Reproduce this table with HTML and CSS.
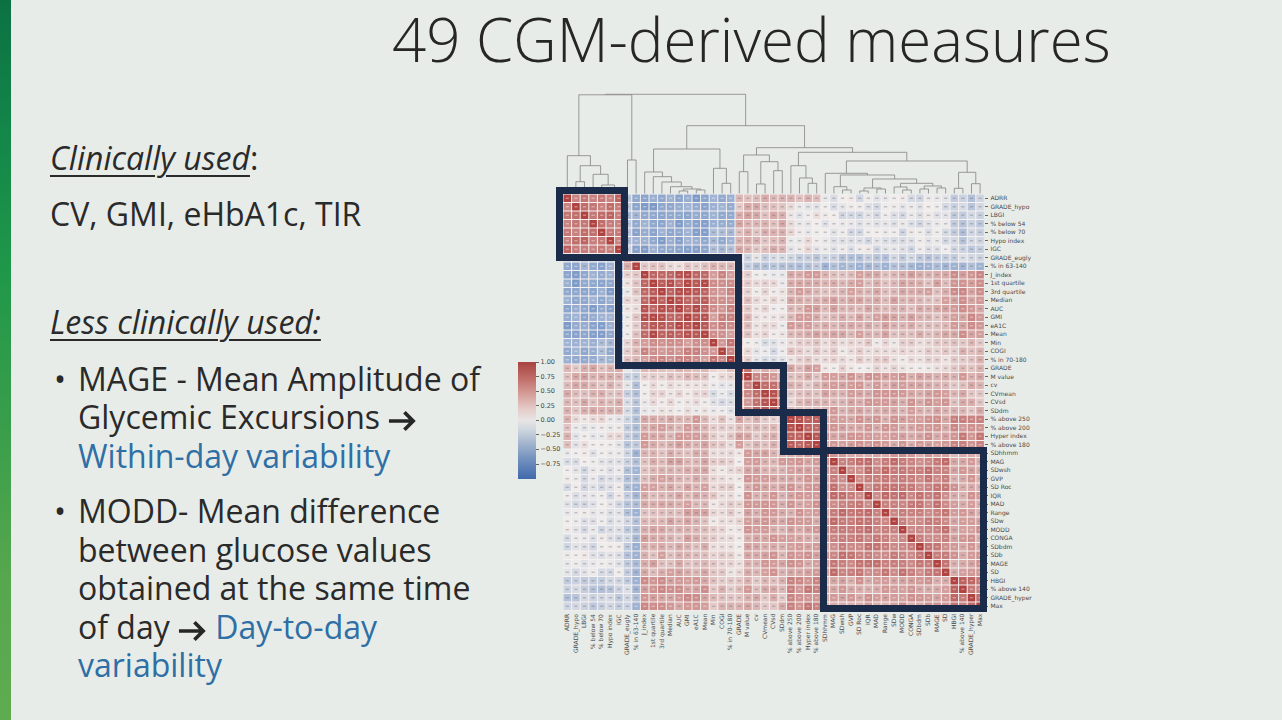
FILE: index.html
```html
<!DOCTYPE html>
<html lang="en">
<head>
<meta charset="utf-8">
<title>49 CGM-derived measures</title>
<link rel="stylesheet" href="styles.css">
</head>
<body>
<div class="slide">
  <div class="accent"></div>
  <div class="content">
    <h1 class="title">49 CGM-derived measures</h1>
    <div class="main">
      <div class="text">
        <p class="head"><span class="u">Clinically used</span>:</p>
        <p class="plain">CV, GMI, eHbA1c, TIR</p>
        <p class="head2"><span class="u">Less clinically used:</span></p>
        <ul class="bullets">
          <li><span class="dot">•</span><span class="lines">MAGE - Mean Amplitude of<br>Glycemic Excursions <svg class="arrow" viewBox="0 0 30 22"><path d="M1 11H26.5M17 2L26 11L17 20"/></svg><br><span class="blue">Within-day variability</span></span></li>
          <li><span class="dot">•</span><span class="lines">MODD- Mean difference<br>between glucose values<br>obtained at the same time<br>of day <svg class="arrow" viewBox="0 0 30 22"><path d="M1 11H26.5M17 2L26 11L17 20"/></svg> <span class="blue">Day-to-day</span><br><span class="blue">variability</span></span></li>
        </ul>
      </div>
      <div class="figure">
        <div class="cbar-col">
          <div class="cbar"></div>
          <div class="cticks">
            <div class="ctick">1.00</div>
            <div class="ctick">0.75</div>
            <div class="ctick">0.50</div>
            <div class="ctick">0.25</div>
            <div class="ctick">0.00</div>
            <div class="ctick">−0.25</div>
            <div class="ctick">−0.50</div>
            <div class="ctick">−0.75</div>
          </div>
        </div>
        <div class="plot">
          <svg id="dendro" class="dendro" viewBox="0 0 421.4 109" width="421.4" height="109"></svg>
          <div class="matrix-wrap">
            <svg id="matrix" class="matrix" viewBox="0 0 421.4 416.5" width="421.4" height="416.5"></svg>
            <div class="box b1"></div>
            <div class="box b2"></div>
            <div class="box b3"></div>
            <div class="box b4"></div>
            <div class="box b5"></div>
          </div>
          <div class="xlabels" id="xlabels"></div>
        </div>
        <div class="ylabels" id="ylabels"></div>
      </div>
    </div>
  </div>
</div>
<script src="script.js"></script>
</body>
</html>
```

FILE: styles.css
```css
* { box-sizing: border-box; }
html, body { margin: 0; padding: 0; }
body {
  width: 1282px;
  height: 720px;
  overflow: hidden;
  background: #e8ece8;
  font-family: "Open Sans", "Liberation Sans", sans-serif;
  color: #2a2a2a;
}
.slide { display: flex; height: 720px; }
.accent {
  width: 11px;
  flex: none;
  background: linear-gradient(180deg, #0c7142 0%, #138649 18%, #209849 38%, #3a9e4b 60%, #56a74d 80%, #5fab50 100%);
}
.content { flex: 1; display: flex; flex-direction: column; min-width: 0; }
.title {
  margin: 0;
  height: 85px;
  padding-left: 381px;
  font-weight: 300;
  font-size: 60px;
  line-height: 78px;
  color: #262626;
  white-space: nowrap;
}
.main { display: flex; }
.text {
  width: 507px;
  flex: none;
  padding: 54px 0 0 39px;
  font-size: 32px;
  line-height: 38.5px;
}
.text p { margin: 0; white-space: nowrap; }
.head { margin-bottom: 17px !important; }
.plain { margin-bottom: 70px !important; }
.head2 { margin-bottom: 18px !important; }
.u {
  font-style: italic;
  text-decoration: underline;
  text-decoration-thickness: 1.5px;
  text-underline-offset: 5px;
}
.bullets { list-style: none; margin: 0; padding: 0; }
.bullets li { display: flex; margin-bottom: 17px; white-space: nowrap; }
.dot { width: 28px; flex: none; padding-left: 4px; }
.blue { color: #2e6fa6; }
.arrow {
  width: 29px;
  height: 22px;
  vertical-align: -3px;
  fill: none;
  stroke: #262626;
  stroke-width: 3.8;
}

.figure { display: flex; flex: none; }
.cbar-col { width: 45px; flex: none; padding-top: 277px; display: flex; align-items: flex-start; }
.cbar {
  width: 18px;
  height: 116.5px;
  flex: none;
  background: linear-gradient(180deg, #a8443f 0%, #c06d68 14%, #d6a09b 28%, #e5cbc8 40%, #e7e5e5 50%, #d2d8e0 57%, #a9b9d0 68%, #7593c0 82%, #4069ab 100%);
}
.cticks {
  display: flex;
  flex-direction: column;
  margin-top: -7.28px;
  font-family: "DejaVu Sans", sans-serif;
  font-size: 6.5px;
  color: #454545;
}
.ctick { height: 14.5625px; display: flex; align-items: center; white-space: nowrap; }
.ctick::before {
  content: "";
  width: 3px;
  height: 0.7px;
  background: #666;
  margin-right: 1.5px;
}
.plot { width: 421.4px; flex: none; }
.dendro { display: block; }
.matrix-wrap { position: relative; width: 421.4px; height: 416.5px; }
.matrix { display: block; }
.box { position: absolute; border: 7px solid #1b2b4a; }
.b1 { left: -7px; top: -7px; width: 72px; height: 74px; }
.b2 { left: 52px; top: 60px; width: 127px; height: 115px; }
.b3 { left: 172px; top: 168px; width: 52px; height: 54px; }
.b4 { left: 217px; top: 215px; width: 47px; height: 46px; }
.b5 { left: 257px; top: 253px; width: 167px; height: 165px; }

.xlabels { display: flex; height: 80px; }
.xl {
  width: 8.6px;
  height: 70px;
  flex: none;
  writing-mode: vertical-rl;
  transform: rotate(180deg);
  text-align: end;
  padding-bottom: 3px;
  font-family: "DejaVu Sans", sans-serif;
  font-size: 6px;
  line-height: 8.6px;
  color: #4a4a4a;
  white-space: nowrap;
}
.ylabels {
  padding-top: 109px;
  display: flex;
  flex-direction: column;
  font-family: "DejaVu Sans", sans-serif;
  font-size: 6px;
  color: #4a4a4a;
}
.yl { height: 8.5px; line-height: 8.5px; display: flex; align-items: center; white-space: nowrap; }
.yl::before {
  content: "";
  width: 3px;
  height: 0.7px;
  background: #666;
  margin: 0 2px 0 1px;
}
```

FILE: script.js
```js
(function () {
  var labels = ["ADRR","GRADE_hypo","LBGI","% below 54","% below 70","Hypo index","IGC","GRADE_eugly","% in 63-140","J_index","1st quartile","3rd quartile","Median","AUC","GMI","eA1C","Mean","Min","COGI","% in 70-180","GRADE","M value","cv","CVmean","CVsd","SDdm","% above 250","% above 200","Hyper index","% above 180","SDhhmm","MAG","SDwsh","GVP","SD Roc","IQR","MAD","Range","SDw","MODD","CONGA","SDbdm","SDb","MAGE","SD","HBGI","% above 140","GRADE_hyper","Max"];
  var N = 49, CW = 8.6, CH = 8.5;
  var seed = 987654;
  function rnd() {
    seed |= 0; seed = seed + 0x6D2B79F5 | 0;
    var t = Math.imul(seed ^ seed >>> 15, 1 | seed);
    t = t + Math.imul(t ^ t >>> 7, 61 | t) ^ t;
    return ((t ^ t >>> 14) >>> 0) / 4294967296;
  }
  function grp(i) {
    if (i <= 6) return "H";
    if (i === 7) return "E1";
    if (i === 8) return "E2";
    if (i <= 16) return "M";
    if (i <= 19) return "M2";
    if (i === 20) return "G0";
    if (i === 21) return "G";
    if (i <= 25) return "C";
    if (i <= 29) return "Y";
    if (i === 30) return "S";
    if (i <= 44) return "V";
    return "V2";
  }
  var base = {
    "H|H": .72, "H|E1": -.3, "H|E2": -.5, "H|M": -.55, "H|M2": -.45, "H|G0": .3, "H|G": .35, "H|C": .3, "H|Y": .03, "H|S": -.02, "H|V": -.08, "H|V2": -.25,
    "E1|E1": 1, "E1|E2": .45, "E1|M": .05, "E1|M2": .15, "E1|G0": -.1, "E1|G": -.15, "E1|C": -.15, "E1|Y": -.2, "E1|S": -.2, "E1|V": -.25, "E1|V2": -.2,
    "E2|E2": 1, "E2|M": .15, "E2|M2": .25, "E2|G0": -.25, "E2|G": -.35, "E2|C": -.3, "E2|Y": -.35, "E2|S": -.35, "E2|V": -.42, "E2|V2": -.4,
    "M|M": .88, "M|M2": .55, "M|G0": .3, "M|G": .25, "M|C": .05, "M|Y": .4, "M|S": .3, "M|V": .35, "M|V2": .5,
    "M2|M2": .6, "M2|G0": .2, "M2|G": .1, "M2|C": -.1, "M2|Y": .15, "M2|S": .1, "M2|V": .12, "M2|V2": .25,
    "G0|G0": 1, "G0|G": .6, "G0|C": .35, "G0|Y": .35, "G0|S": .1, "G0|V": .08, "G0|V2": .3,
    "G|G": 1, "G|C": .5, "G|Y": .3, "G|S": .4, "G|V": .45, "G|V2": .4,
    "C|C": .8, "C|Y": .25, "C|S": .35, "C|V": .42, "C|V2": .3,
    "Y|Y": .85, "Y|S": .4, "Y|V": .45, "Y|V2": .6,
    "S|S": 1, "S|V": .45, "S|V2": .35,
    "V|V": .66, "V|V2": .45,
    "V2|V2": .72
  };
  function b(a, c) {
    var k = a + "|" + c;
    if (k in base) return base[k];
    return base[c + "|" + a];
  }
  var M = [];
  for (var i = 0; i < N; i++) M.push([]);
  for (i = 0; i < N; i++) {
    for (var j = 0; j <= i; j++) {
      var v;
      if (i === j) v = 1;
      else {
        v = b(grp(i), grp(j));
        if (j === 0 && (grp(i) === "G" || grp(i) === "C" || grp(i) === "Y")) v = 0.28;
        v += (rnd() - 0.5) * 0.22;
        if (v > 0.97) v = 0.97;
        if (v < -0.97) v = -0.97;
      }
      M[i][j] = v; M[j][i] = v;
    }
  }
  function mix(a, c, t) {
    return [0, 1, 2].map(function (k) { return Math.round(a[k] + (c[k] - a[k]) * t); });
  }
  var W = [240, 237, 236], R = [176, 66, 63], B = [64, 110, 180];
  function color(v) {
    var t = Math.min(1, Math.abs(v));
    return mix(W, v >= 0 ? R : B, t);
  }
  function css(c) { return "rgb(" + c[0] + "," + c[1] + "," + c[2] + ")"; }

  var parts = ['<rect width="421.4" height="416.5" fill="#f6f1f1"/>'];
  for (i = 0; i < N; i++) {
    for (j = 0; j < N; j++) {
      var val = M[i][j];
      var c = color(val);
      var x = j * CW, y = i * CH;
      parts.push('<rect x="' + (x + 0.5).toFixed(2) + '" y="' + (y + 0.5).toFixed(2) + '" width="7.6" height="7.5" fill="' + css(c) + '"/>');
      var mk = Math.abs(val) > 0.45 ? mix(c, [255, 255, 255], 0.4) : mix(c, [110, 110, 115], 0.4);
      parts.push('<rect x="' + (x + 2.7).toFixed(2) + '" y="' + (y + 3.6).toFixed(2) + '" width="3.2" height="1.3" fill="' + css(mk) + '"/>');
    }
  }
  document.getElementById("matrix").innerHTML = parts.join("");

  var tree =
    [9.3,
      [9.8,
        [70.7, 0, [80.7, [96.7, 1, 2], [89.3, 3, [100, 4, [104, 5, 6]]]]],
        [75, 7, 8]],
      [40.7,
        [64,
          [87, 9, [91.7, 10, [97, 11, [101.7, 12, [104, [106, 13, 14], [105, 15, 16]]]]]],
          [83.3, 17, [98.3, 18, 19]]],
        [62.7,
          [70, [86.7, 20, 21], [76.7, [99, 22, 23], [85.7, 24, 25]]],
          [67.3,
            [80.7, 26, [93, 27, [98.3, 28, 29]]],
            [76,
              [88.3, 30,
                [90,
                  [101.7, 31, [105, 32, 33]],
                  [94,
                    [103, [106, 34, 35], [104, 36, 37]],
                    [98.3, [102, 38, [105, 39, 40]], [101, [104, 41, 42], [103, 43, 44]]]]]],
              [87.3, [103.3, 45, 46], [98.7, 47, 48]]]]]]];
  var d = [];
  function draw(n) {
    if (typeof n === "number") return { x: 4.3 + CW * n, y: 108.5 };
    var a = draw(n[1]), c = draw(n[2]), h = n[0];
    d.push("M" + a.x.toFixed(2) + " " + a.y.toFixed(2) + "V" + h + "H" + c.x.toFixed(2) + "V" + c.y.toFixed(2));
    return { x: (a.x + c.x) / 2, y: h };
  }
  draw(tree);
  document.getElementById("dendro").innerHTML = '<path d="' + d.join("") + '" fill="none" stroke="#8d8d8d" stroke-width="0.9"/>';

  var xl = document.getElementById("xlabels");
  var yl = document.getElementById("ylabels");
  labels.forEach(function (t) {
    var e = document.createElement("div");
    e.className = "xl"; e.textContent = t; xl.appendChild(e);
    var f = document.createElement("div");
    f.className = "yl"; f.textContent = t; yl.appendChild(f);
  });
})();
```
